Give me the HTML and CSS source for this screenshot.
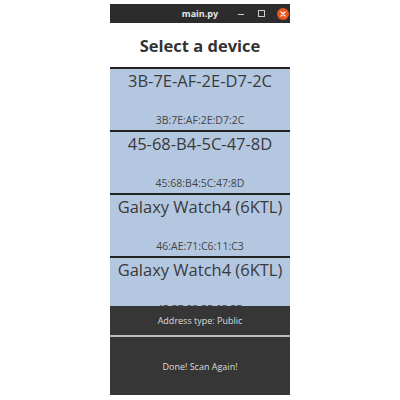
FILE: index.html
```html
<!DOCTYPE html>
<html>
<head>
<meta charset="utf-8">
<link rel="stylesheet" href="styles.css">
</head>
<body>
<div class="window">
  <div class="titlebar">
    <span class="spacer"></span>
    <span class="title">main.py</span>
    <span class="controls">
      <span class="min"></span>
      <span class="max"></span>
      <span class="close">
        <svg width="12" height="12" viewBox="0 0 12 12"><circle cx="6" cy="6" r="6" fill="#e95420"/><path d="M4 4 L8 8 M8 4 L4 8" stroke="#fff" stroke-width="1.2" stroke-linecap="round"/></svg>
      </span>
    </span>
  </div>
  <div class="header">Select a device</div>
  <div class="list">
    <div class="item"><div class="name">3B-7E-AF-2E-D7-2C</div><div class="addr">3B:7E:AF:2E:D7:2C</div></div>
    <div class="item"><div class="name">45-68-B4-5C-47-8D</div><div class="addr">45:68:B4:5C:47:8D</div></div>
    <div class="item"><div class="name">Galaxy Watch4 (6KTL)</div><div class="addr">46:AE:71:C6:11:C3</div></div>
    <div class="item"><div class="name">Galaxy Watch4 (6KTL)</div><div class="addr">4E:57:83:5E:65:5B</div></div>
  </div>
  <div class="info">Address type: Public</div>
  <div class="button">Done! Scan Again!</div>
</div>
</body>
</html>
```
FILE: styles.css
```css
html, body {
  margin: 0;
  padding: 0;
  background: #ffffff;
}
body {
  font-family: "Open Sans", "DejaVu Sans", sans-serif;
}
.window {
  width: 180px;
  margin: 4px 0 0 110px;
  display: flex;
  flex-direction: column;
}
.titlebar {
  height: 19px;
  background: #2c2c2c;
  display: grid;
  grid-template-columns: 1fr auto 1fr;
  align-items: center;
}
.title {
  color: #e6e6e6;
  font-weight: bold;
  font-size: 9px;
}
.controls {
  display: flex;
  align-items: center;
  justify-content: flex-end;
  padding-right: 1px;
}
.min {
  width: 6px;
  height: 1px;
  background: #cfcfcf;
  margin-right: 14px;
  margin-top: 2px;
}
.max {
  width: 5px;
  height: 5px;
  border: 1px solid #cfcfcf;
  margin-right: 12px;
}
.close {
  display: flex;
}
.header {
  height: 44px;
  display: flex;
  align-items: center;
  justify-content: center;
  font-size: 16.5px;
  font-weight: bold;
  color: #333333;
}
.list {
  height: 239px;
  overflow: hidden;
  background: #b4c7e1;
}
.item {
  border-top: 2px solid #222222;
  height: 61px;
  display: flex;
  flex-direction: column;
  align-items: center;
}
.name {
  font-size: 16.5px;
  color: #3a3a3a;
  margin-top: 1px;
  line-height: 22px;
}
.addr {
  font-size: 10.5px;
  color: #444444;
  margin-top: 21px;
  line-height: 14px;
}
.info {
  height: 29px;
  background: #363636;
  color: #dcdcdc;
  font-size: 9px;
  display: flex;
  align-items: center;
  justify-content: center;
  border-bottom: 2px solid #bdbdbd;
}
.button {
  height: 58px;
  background: #363636;
  color: #dcdcdc;
  font-size: 9px;
  display: flex;
  align-items: center;
  justify-content: center;
}
```
